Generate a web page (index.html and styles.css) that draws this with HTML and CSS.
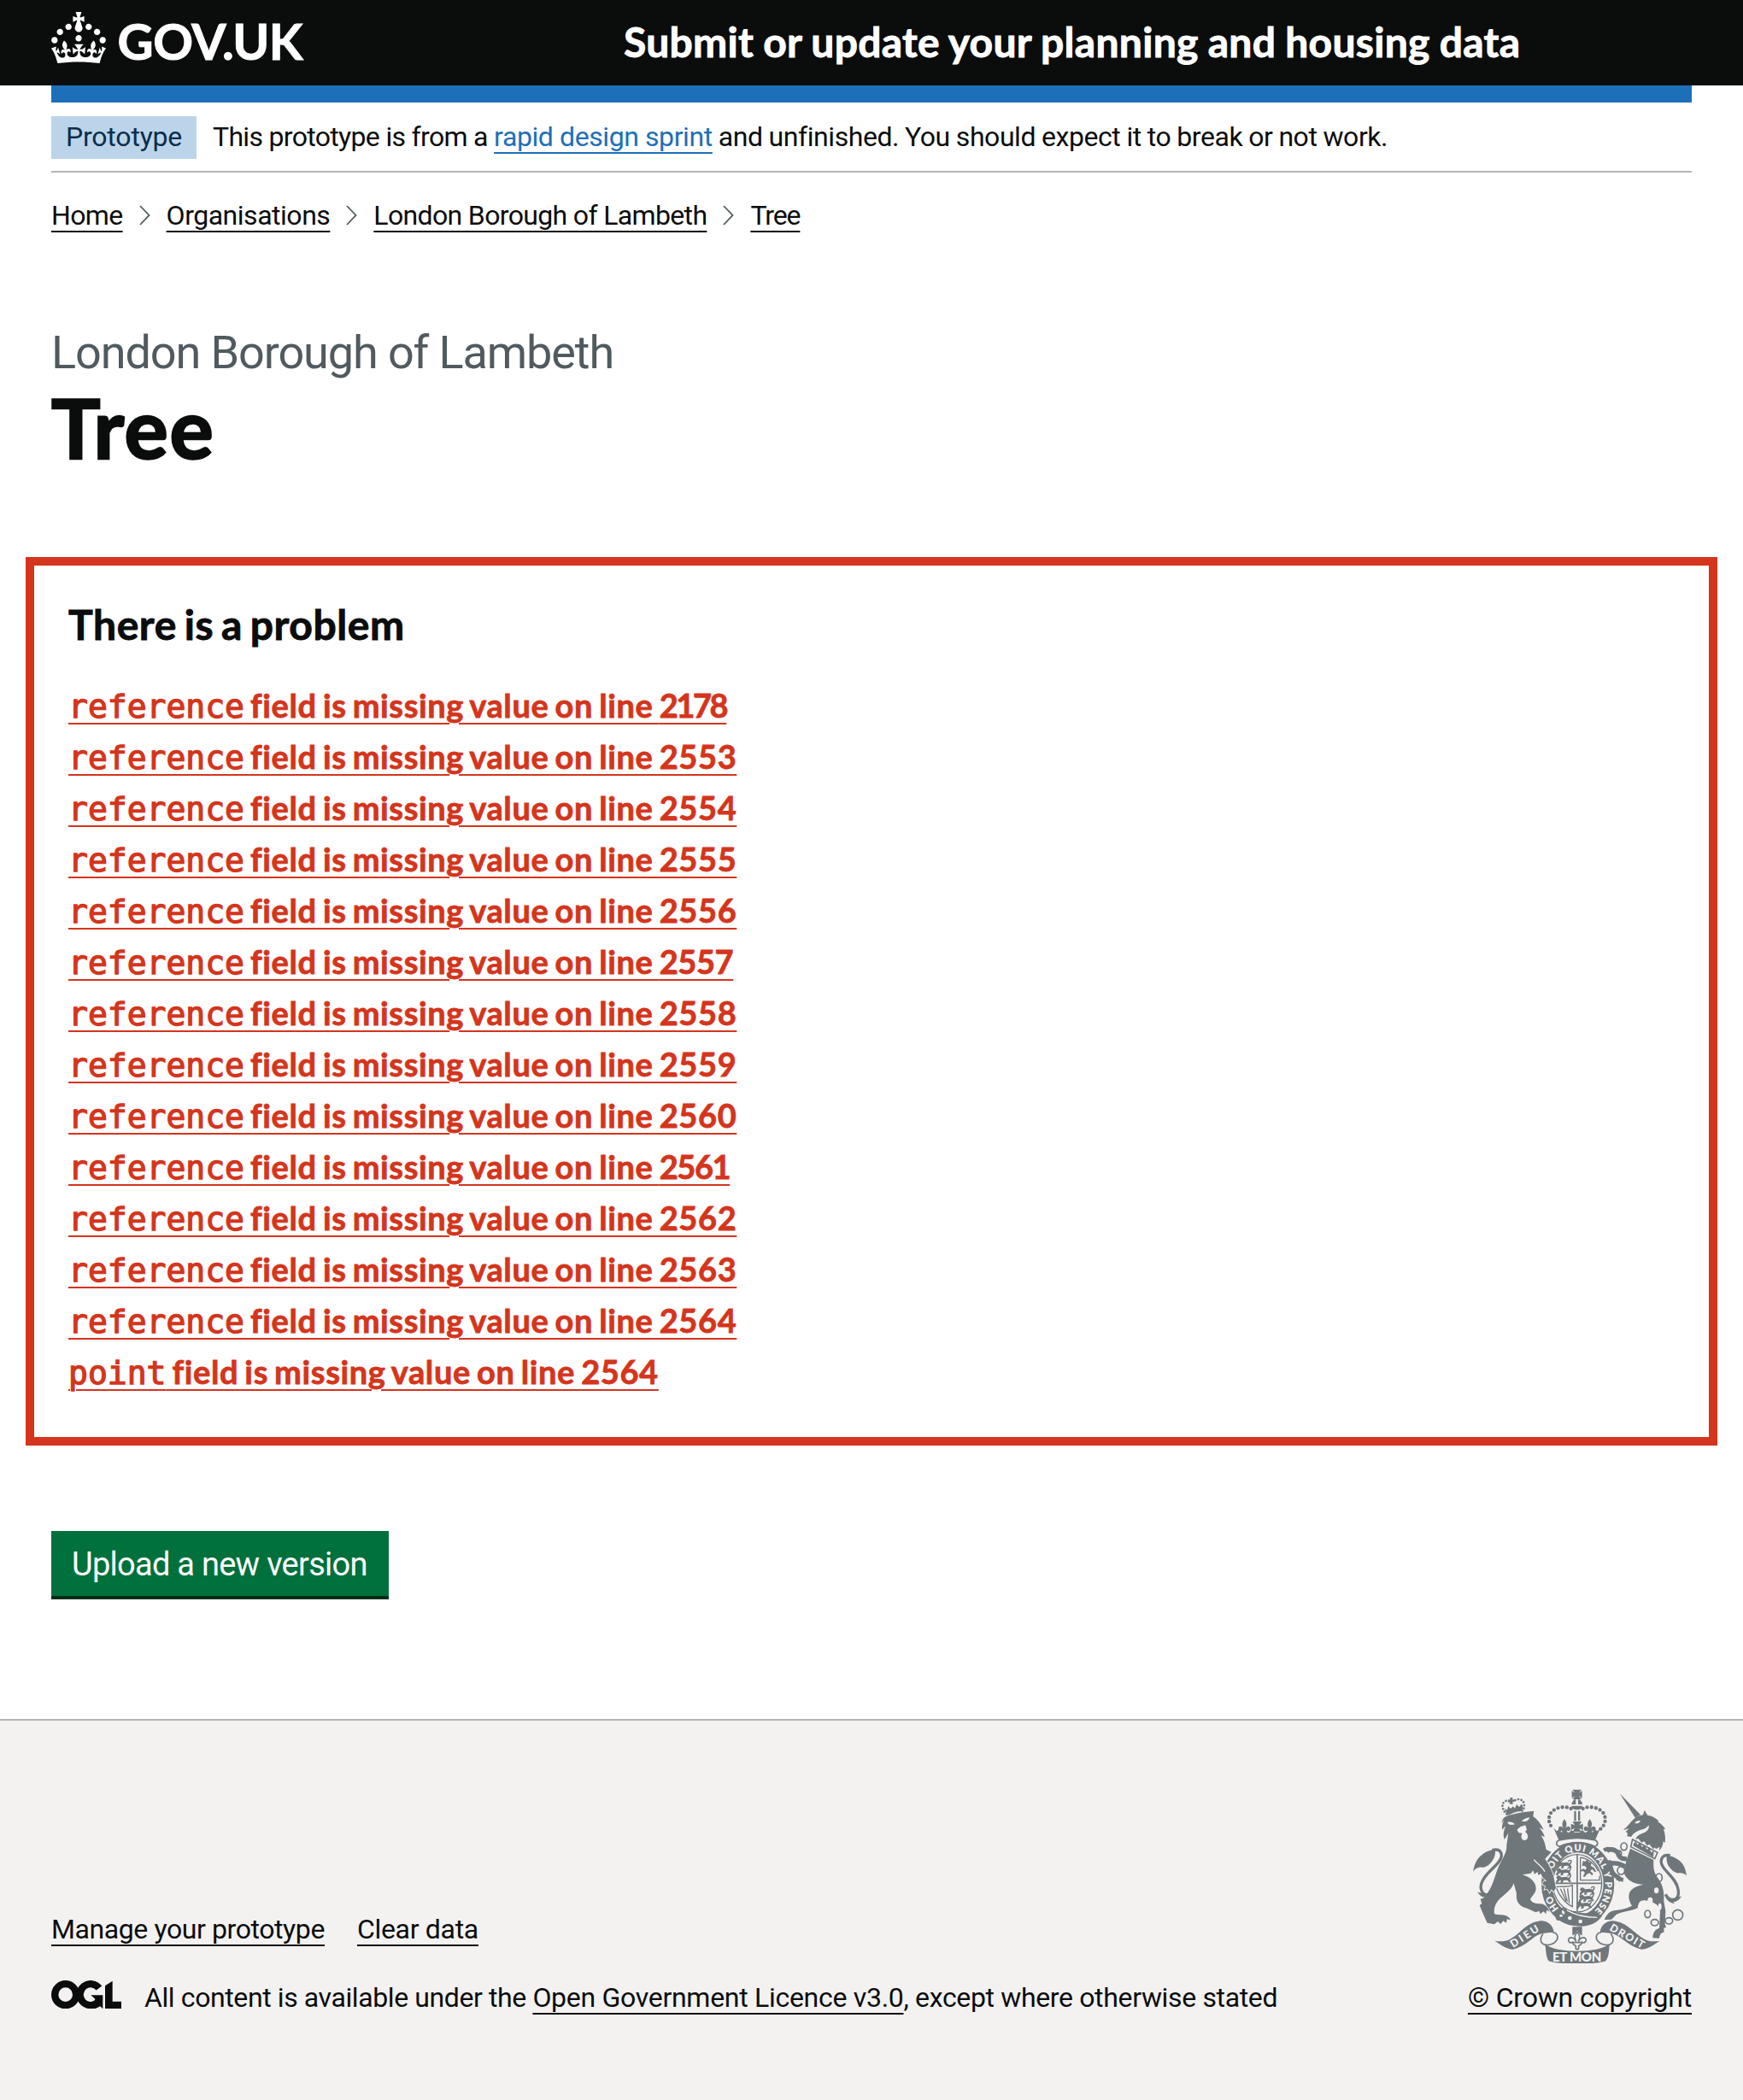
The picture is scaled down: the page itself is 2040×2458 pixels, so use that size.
FILE: index.html
```html
<!DOCTYPE html>
<html lang="en">
<head>
<meta charset="utf-8">
<title>Tree - Submit or update your planning and housing data</title>
<link rel="stylesheet" href="styles.css">
</head>
<body>
<header class="header">
  <div class="header-inner">
    <a class="logo" href="#" aria-label="GOV.UK">
      <svg class="logo-svg" viewBox="0 0 150 30" width="300" height="60">
        <path fill="#fff" d="M22.6 10.4c-1 .4-2-.1-2.4-1-.4-.9.1-2 1-2.4.9-.4 2 .1 2.4 1s-.1 2-1 2.4m-5.9 6.7c-.9.4-2-.1-2.4-1-.4-.9.1-2 1-2.4.9-.4 2 .1 2.4 1s-.1 2-1 2.4m10.8-3.7c-1 .4-2-.1-2.4-1-.4-.9.1-2 1-2.4.9-.4 2 .1 2.4 1s0 2-1 2.4m3.3 4.8c-1 .4-2-.1-2.4-1-.4-.9.1-2 1-2.4.9-.4 2 .1 2.4 1s-.1 2-1 2.4M17 4.7l2.3 1.2V2.5l-2.3.7-.2-.2.9-3h-3.4l.9 3-.2.2c-.1.1-2.3-.7-2.3-.7v3.4L15 4.7c.1.1.1.2.2.2l-1.3 4c-.1.2-.1.4-.1.6 0 1.1.8 2 1.9 2.2h.7c1-.2 1.9-1.1 1.9-2.1 0-.2 0-.4-.1-.6l-1.3-4c-.1-.2 0-.2.1-.3m-7.6 5.7c.9.4 2-.1 2.4-1 .4-.9-.1-2-1-2.4-.9-.4-2 .1-2.4 1s0 2 1 2.4m-5 3c.9.4 2-.1 2.4-1 .4-.9-.1-2-1-2.4-.9-.4-2 .1-2.4 1s.1 2 1 2.4m-3.2 4.8c.9.4 2-.1 2.4-1 .4-.9-.1-2-1-2.4-.9-.4-2 .1-2.4 1s0 2 1 2.4m14.8 11c4.4 0 8.6.3 12.3.8 1.1-4.5 2.4-7 3.7-8.8l-2.5-.9c.2 1.3.3 1.9 0 2.7-.4-.4-.8-1.1-1.1-2.3l-1.2 4c.7-.5 1.3-.8 2-.9-1.1 2.5-2.6 3.1-3.5 3-1.1-.2-1.7-1.2-1.5-2.1.3-1.2 1.5-1.5 2.1-.1 1.1-2.3-.8-3-2-2.3 1.9-1.9 2.1-3.5.6-5.6-2.1 1.6-2.1 3.2-1.2 5.5-1.2-1.4-3.2-.6-2.5 1.6.9-1.4 2.1-.5 1.9.8-.2 1.1-1.7 2.1-3.5 1.9-2.7-.2-2.9-2.1-2.9-3.6.7-.1 1.9.5 2.9 1.9l.4-4.3c-1.1 1.1-2.1 1.4-3.2 1.4.4-1.2 2.1-3 2.1-3h-5.4s1.7 1.9 2.1 3c-1.1 0-2.1-.2-3.2-1.4l.4 4.3c1-1.4 2.2-2 2.9-1.9-.1 1.5-.2 3.4-2.9 3.6-1.9.2-3.4-.8-3.5-1.9-.2-1.3 1-2.2 1.9-.8.7-2.3-1.2-3-2.5-1.6.9-2.2.9-3.9-1.2-5.5-1.5 2-1.3 3.7.6 5.6-1.2-.7-3.1 0-2 2.3.6-1.4 1.8-1.1 2.1.1.2.9-.3 1.9-1.5 2.1-.9.2-2.4-.5-3.5-3 .6 0 1.2.3 2 .9l-1.2-4c-.3 1.1-.7 1.9-1.1 2.3-.3-.8-.2-1.4 0-2.7l-2.9.9C1.3 23 2.6 25.5 3.7 30c3.7-.5 7.9-.8 12.3-.8"/>
        <text class="logo-text" x="38.8" y="28" textLength="108.500" lengthAdjust="spacing">GOV.UK</text>
      </svg>
    </a>
    <a class="service" href="#">Submit or update your planning and housing data</a>
  </div>
</header>

<div class="container">
  <div class="blue-bar"></div>
  <div class="phase">
    <strong class="tag">Prototype</strong>
    <p class="phase-text"><span class="phase-a">This prototype is from a </span><a class="link phase-link" href="#">rapid design sprint</a><span class="phase-b"> and unfinished. You should expect it to break or not work.</span></p>
  </div>

  <nav class="crumbs">
    <a class="crumb crumb-home" href="#">Home</a>
    <svg class="chev" viewBox="0 0 13 24"><path d="M1 1l10.500 11L1 23"/></svg>
    <a class="crumb crumb-orgs" href="#">Organisations</a>
    <svg class="chev" viewBox="0 0 13 24"><path d="M1 1l10.500 11L1 23"/></svg>
    <a class="crumb crumb-org" href="#">London Borough of Lambeth</a>
    <svg class="chev" viewBox="0 0 13 24"><path d="M1 1l10.500 11L1 23"/></svg>
    <a class="crumb crumb-tree" href="#">Tree</a>
  </nav>

  <main>
    <span class="caption">London Borough of Lambeth</span>
    <h1 class="title">Tree</h1>

    <section class="errors">
      <h2 class="errors-title">There is a problem</h2>
      <ul class="errors-list">
        <li><a href="#"><code>reference</code> field is missing value on line <span class="n3">2178</span></a></li>
        <li><a href="#"><code>reference</code> field is missing value on line 2553</a></li>
        <li><a href="#"><code>reference</code> field is missing value on line 2554</a></li>
        <li><a href="#"><code>reference</code> field is missing value on line 2555</a></li>
        <li><a href="#"><code>reference</code> field is missing value on line 2556</a></li>
        <li><a href="#"><code>reference</code> field is missing value on line <span class="n1">2557</span></a></li>
        <li><a href="#"><code>reference</code> field is missing value on line 2558</a></li>
        <li><a href="#"><code>reference</code> field is missing value on line 2559</a></li>
        <li><a href="#"><code>reference</code> field is missing value on line 2560</a></li>
        <li><a href="#"><code>reference</code> field is missing value on line <span class="n2">2561</span></a></li>
        <li><a href="#"><code>reference</code> field is missing value on line 2562</a></li>
        <li><a href="#"><code>reference</code> field is missing value on line 2563</a></li>
        <li><a href="#"><code>reference</code> field is missing value on line 2564</a></li>
        <li><a href="#"><code>point</code> field is missing value on line 2564</a></li>
      </ul>
    </section>

    <button class="button">Upload a new version</button>
  </main>
</div>

<footer class="footer">
  <div class="footer-inner">
    <div class="footer-main">
      <div class="footer-links">
        <a class="flink manage" href="#">Manage your prototype</a>
        <a class="flink clear" href="#">Clear data</a>
      </div>
      <div class="licence">
        <svg class="ogl" viewBox="30 55 246 100" role="img" aria-label="OGL">
          <circle class="ogl-ring" cx="80" cy="105" r="37.500"/>
          <path class="ogl-ring" d="M198 82A37.500 37.500 0 1 0 192 134"/>
          <path d="M169 107h42v48l-9-9c-8 5-18 9-30 9v-26c8 0 11-4 12-9z"/>
          <path d="M219 74l26-17v72h31v26h-57z"/>
        </svg>
        <p class="licence-text"><span class="lic-a">All content is available under the </span><a class="flink lic-link" href="#">Open Government Licence v3.0</a><span class="lic-b">, except where otherwise stated</span></p>
      </div>
    </div>
    <div class="copyright">
      <svg class="crest" viewBox="72 70 750 612" aria-hidden="true">
        <defs>
          <path id="motto-a" d="M373 490A97 117 0 0 1 344 423"/>
          <path id="motto-b" d="M346 373A97 117 0 1 1 488 506"/>
          <g id="fleur"><path d="M0-20c10 12 9 22 3 32 8-10 18-8 18 2 0 7-8 10-12 5 0 5-3 7-6 9h-6c-3-2-6-4-6-9-4 5-12 2-12-5 0-10 10-12 18-2-6-10-7-20 3-32z"/></g>
          <g id="passant"><path d="M-30-2l5-7 9 1 4 5 18-2 8 4 6-8 3 2-5 11 5 10h-8l-5-7-14 1-3 8h-8l2-9-8 3-3 6h-7l2-8 4-4z"/><path class="thin" d="M10-6c2-8 12-7 11-1"/></g>
        </defs>

        <!-- crown -->
        <path d="M421 72h32l-10 12 12-8v26l-12-9 10 13h-32l10-13-12 9V76l12 8z"/>
        <path d="M418 124c2-12 9-18 15-19v19zM441 105c8 2 14 8 15 19h-15zM418 129h38c0 9-8 14-19 14s-19-5-19-14z"/>
        <path d="M427 147h7v35h-7zM441 147h7v35h-7z"/>
        <path class="pearls" d="M416 139C395 127 355 135 343 158C335 175 338 195 355 210"/>
        <path class="pearls" d="M458 139C480 127 519 135 532 158C540 175 537 195 520 210"/>
        <use href="#fleur" x="393" y="196"/><use href="#fleur" x="482" y="196"/>
        <path d="M422 184h32l-9 13 13-5v22l-13-6 7 12h-30l7-12-13 6v-22l13 5z"/>
        <path d="M355 207l11 11 10-8 6 12 14-6 12 8 10-10 10 8h18l10-8 10 10 12-8 14 6 6-12 10 8 11-11-18 42c-42-10-86-10-128 0z"/>
        <path class="line" d="M374 250c40-10 88-10 128 0 10 5 10 18-2 22-36-18-88-18-124 0-14-4-14-17-2-22z"/>

        <!-- garter and shield -->
        <ellipse class="garter" cx="440" cy="403" rx="109" ry="129"/>
        <ellipse class="thin" cx="438" cy="401" rx="86" ry="101"/>
        <path class="quarter" d="M438 299v200M352 401h172"/>
        <use href="#passant" x="396" y="332"/><use href="#passant" x="394" y="357"/><use href="#passant" x="394" y="383"/>
        <use href="#passant" x="477" y="425"/><use href="#passant" x="474" y="450"/><use href="#passant" x="466" y="474"/>
        <path d="M458 322l8 3 5-7 10 10 8 0-4 11 12 8 8 14-6 0-9-10-6 8 10 8-4 7-9-9-9 4-8 10-6-2 7-12-7-8-6 4-2-6 10-5 7 4 4-8-8-7-8 2z"/>
        <path class="thin" d="M449 310v80h67v-15M449 310c28 4 52 24 62 48"/>
        <path class="harp" d="M363 414c18-5 37 4 58-6v75c-24-10-46-38-58-69zM379 420l20 43M391 419l12 46M404 419l6 52"/>
        <text class="motto"><textPath href="#motto-a">HO</textPath></text>
        <text class="motto"><textPath href="#motto-b" textLength="408">SOIT QUI MAL Y PENSE</textPath></text>
        <path d="M392 486c35 20 80 23 104 16l30 13c-28 44-97 50-142 12z"/>
        <path class="cut" d="M400 495c34 20 72 26 108 26"/>
        <g class="light"><circle cx="412" cy="523" r="7"/><circle cx="449" cy="535" r="7"/><path d="M384 497c8 0 12 6 9 12l-6 8c-6 4-10 3-12-2 2-3 8-5 9-9z"/></g>
        <path class="ring" d="M377 492c14-8 25 1 22 12M374 505c-16 12-10 27 3 24 16-3 16-18 5-22z"/>

        <!-- lion -->
        <path class="dots" d="M190 158C174 144 170 122 184 114C192 108 198 112 202 118M246 148C256 132 254 112 238 107C228 104 220 108 216 114"/>
        <path d="M202 100h10l-2 8 8-2v9l-7-1 1 9h-12l2-9-7 1v-9l7 2zM182 138l10 6 4-14 8 9 9-8 6 7 6-14 9 9 8-10 5 5-1 20c-18 0-38 6-52 17z"/>
        <path class="edge" d="M172 190c2-12 7-20 16-24 30-10 60-16 98-19l-3 19c14 10 28 26 37 47l-16-8c9 10 16 20 20 34l-13-6c11 18 15 32 18 50l18 8-22 24c14 22 27 45 31 68l7 34-8 14-8-9-6 12-8-14-10 3 4-12-12-7 6-10 10-1-14-12-7-14-8 6-4-12-10 8-5-13-8 10-30 5c24 6 48 24 48 48 0 18-16 28-20 38 6 14 20 15 34 16 20 1 29 15 34 28l-10-6-3 14-8-9-12 9-4-11-12 5-30-14c-30-8-40-24-37-52l-10-36c-8 28-46 46-60 68-8 12-10 28-8 39 14 8 46-4 57 22l-13-3-2 13-11-7-9 11-10-9-12 10-25-5-15-33-12-29 8-5-5-17 10-3c28-28 35-58 48-96 14-38 36-60 34-90l6-42-13 22c-8-14-2-34 4-48l-13 14c-1-14 3-27 8-37z"/>
        <g class="light"><path d="M193 186c12-2 22 1 26 8-14 4-24 2-26-8zM243 183c8-10 17-11 27-14-1 12-12 18-27 14zM226 213l12-10 18-6 5 16-6 7c14 11 12 28-1 30-12 0-16-14-9-25l-12-1z"/></g>
        <path class="cut" d="M286 318c10 14 28 22 38 42"/>
        <path d="M72 360c6-28 12-46 36-63 14-10 30-15 42-13 2 21-7 36-18 48-10 10-21 15-30 13-13-2-22 5-30 15z"/>
        <path class="tail" d="M139 285c32-9 42 16 24 40-18 25-52 44-62 78-4 14 0 30 12 37 18 6 32-8 40-22"/>
        <path d="M87 431c12 6 17 4 27 7 13 2 23-3 31-10-3 16-13 25-32 27l7-6c-13 3-24-2-33-18z"/>

        <!-- unicorn -->
        <path d="M587 86l73 74-18 12z"/>
        <path d="M600 213c14-9 22-24 37-38 11-9 22-13 32-14l5-17 11 18c18 3 32 12 40 21l-5 1c12 8 21 16 28 28l-7-2c5 16 8 31 5 49l-6-5c-1 13-5 24-14 33l1-14c-9 6-13 10-17 2l-5 6-14-17-8 5-10-15-9 4-12-14-9 2c5-15 20-18 31-23 14-6 17-18 15-26-9 12-21 15-32 18-12 4-23 12-30 23l-14-2 2-11-7-5 12-11-17 4z"/>
        <path class="light" d="M640 190c4-8 13-10 20-8-4 8-10 10-20 8z"/>
        <path class="line" d="M632 247l88 46-10 22-84-42z"/>
        <path d="M633 268l9-14 8 12 7-8 9 16 8-8 9 17 9-8 5 18 10-7-2 24z"/>
        <path class="edge" d="M624 279l82 40c-1 27 0 42 14 62 20 26 24 54 22 82l6 35-2 46 4 12-8 2 1 14-12 6-6 16-22-1c0-18 8-30 23-34l3-58c-3-28-28-36-55-40-16-2-22 10-24 27-22 11-52 12-74 22l-18 18-25 1c9-20 21-32 40-33 21-3 41-7 57-16-11-16-15-38-5-52 12-15 29-18 45-23-27 0-50-10-62-28-10-14-5-32 0-45 4-22 12-36 16-53z"/>
        <path class="limb" d="M612 315c-20 2-29-8-32-22-10-10-24-14-38-6M606 343c-20-14-38-15-54-9 6 18 6 36 28 45l12 11"/>
        <path d="M534 290l-6-11 14-6 18 2-10 14zM543 337l-8-10 16-8 18 6-14 14zM577 375l24 8-3 14-14-7-9 1z"/>
        <g class="ring"><ellipse cx="602" cy="272" rx="11" ry="13"/><ellipse cx="585" cy="296" rx="8" ry="10"/><ellipse cx="592" cy="356" rx="13" ry="14"/><ellipse cx="725" cy="381" rx="11" ry="14"/><ellipse cx="685" cy="509" rx="10" ry="13"/><ellipse cx="710" cy="539" rx="13" ry="11"/><ellipse cx="760" cy="533" rx="13" ry="11"/><circle cx="791" cy="512" r="18"/></g>
        <g class="light"><ellipse cx="716" cy="426" rx="8" ry="10"/><ellipse cx="694" cy="461" rx="9" ry="11"/><ellipse cx="728" cy="483" rx="6" ry="12"/></g>
        <path d="M822 374c-5-28-10-42-32-57-14-10-27-14-38-12-2 20 4 34 14 45 9 11 20 16 30 15 11-1 19 2 26 9z"/>
        <path class="tail" d="M764 303c-28-6-40 18-24 42 16 23 46 42 52 76 4 18-2 32-10 39-14 4-27-6-34-20"/>
        <path d="M804 446c-12 6-18 4-27 7-14 1-23-3-31-9 5 16 17 26 34 28l-5-6c12 0 22-6 29-20z"/>

        <!-- scroll -->
        <path d="M148 603c20 3 38 3 54-6 40-22 56-58 108-64 24-1 44 16 46 40l-42 4c-32 8-54 46-102 56-22 0-42-16-64-30zM728 603c-20 3-38 3-54-6-40-22-58-58-110-64-24-1-44 16-46 40l42 4c32 8 56 46 104 56 22 0 42-16 64-30z"/>
        <path class="line" d="M318 578c-14 20-10 38 14 40 26-2 38-16 37-30-2-10-8-14-17-14M556 578c14 20 10 38-14 40-26-2-38-16-37-30 2-10 8-14 17-14"/>
        <path d="M324 614c40 34 186 34 228 0-4 24-1 42-14 60-28 13-170 13-200 0-12-16-8-38-14-60z"/>
        <path d="M421 554h34v30c-8-2-10-9-17-17-7 8-9 15-17 17z"/>
        <path class="line" d="M438 572c12 12 10 22 4 33 9-18 27-16 27-5 0 9-9 12-14 8-1 9-8 10-12 13v7c0 7-10 7-10 0v-7c-4-3-11-4-12-13-5 4-14 1-14-8 0-11 18-13 27 5-6-11-8-21 4-33zM421 609h34"/>
        <text class="scroll-text" transform="translate(213 628) rotate(-33)" textLength="112">DIEU</text>
        <text class="scroll-text" transform="translate(549 564) rotate(30)" textLength="134">DROIT</text>
        <text class="scroll-text scroll-mid" x="351" y="675" textLength="172">ET MON</text>
      </svg>
      <a class="flink crown" href="#">© Crown copyright</a>
    </div>
  </div>
</footer>
</body>
</html>
```
FILE: styles.css
```css
* { box-sizing: border-box; }

body {
  margin: 0;
  background: #fff;
  color: #0b0c0c;
  font: 400 32px/40px Roboto, "Liberation Sans", sans-serif;
}

p, h1, h2, ul { margin: 0; padding: 0; }
a { color: inherit; }

.container, .header-inner, .footer-inner { margin: 0 60px; }

/* header */
.header { height: 100px; background: #0b0c0c; color: #fff; }
.header-inner { display: flex; align-items: flex-start; }
.logo { width: 670px; padding-top: 14px; text-decoration: none; }
.logo-svg { display: block; overflow: visible; }
.logo-text { font: 700 29px Lato, sans-serif; fill: #fff; stroke: #fff; stroke-width: 0.5; }
.service {
  padding-top: 19px;
  font: 700 48px/60px Lato, sans-serif;
  letter-spacing: 0.3px;
  word-spacing: -1px;
  -webkit-text-stroke: 0.9px currentColor;
  color: #fff;
  text-decoration: none;
  white-space: nowrap;
}
.blue-bar { height: 20px; background: #1d70b8; }

/* phase banner */
.phase {
  display: flex;
  align-items: flex-start;
  height: 82px;
  padding-top: 16px;
  border-bottom: 2px solid #b1b4b6;
}
.tag {
  width: 170px;
  height: 50px;
  padding: 4px 0 0 17px;
  margin-right: 19px;
  background: #bbd4ea;
  color: #0c2d4a;
  font-weight: 400;
  letter-spacing: -0.2px;
}
.phase-text { padding-top: 4px; white-space: pre; }
.phase-a { letter-spacing: -0.68px; }
.phase-b { letter-spacing: -0.44px; word-spacing: -0.5px; }
.link, .crumb, .flink {
  text-decoration: underline;
  text-decoration-thickness: 2px;
  text-underline-offset: 7px;
}
.link { color: #1d70b8; }
.phase-link { letter-spacing: -0.41px; }

/* breadcrumbs */
.crumbs { display: flex; align-items: center; gap: 19px; height: 40px; margin-top: 30px; }
.crumb { white-space: nowrap; }
.chev { width: 13px; height: 24px; fill: none; stroke: #505a5f; stroke-width: 1.8; }
.crumb-home { letter-spacing: -0.63px; }
.crumb-orgs { letter-spacing: -0.48px; }
.crumb-org { letter-spacing: -0.65px; }
.crumb-tree { letter-spacing: -1.1px; }

/* page title */
.caption {
  display: block;
  margin: 111px 0 10px;
  font-size: 54px;
  line-height: 60px;
  letter-spacing: -1.1px;
  color: #505a5f;
}
.title {
  padding-top: 1px;
  margin-bottom: 106px;
  font: 700 96px/92px Lato, sans-serif;
  letter-spacing: 1.6px;
  -webkit-text-stroke: 2.4px currentColor;
}

/* error summary */
.errors { margin: 0 -30px 100px; padding: 40px; border: 10px solid #d4351c; }
.errors-title {
  padding-top: 1px;
  margin-bottom: 43px;
  font: 700 48px/56px Lato, sans-serif;
  letter-spacing: 0.6px;
  word-spacing: -3.5px;
  -webkit-text-stroke: 0.9px currentColor;
}
.errors-list {
  list-style: none;
  font: 700 38px/46px Lato, sans-serif;
  letter-spacing: 0.62px;
  word-spacing: -2.7px;
}
.errors-list li { margin-bottom: 14px; }
.errors-list a {
  color: #d4351c;
  text-decoration: underline;
  text-decoration-thickness: 2px;
  text-underline-offset: 6px;
  -webkit-text-stroke: 0.8px #d4351c;
}
.errors-list code {
  font: 400 38px/1 "DejaVu Sans Mono", monospace;
  letter-spacing: 0;
  -webkit-text-stroke: 1.3px #d4351c;
}
.n3 { letter-spacing: -2.4px; }
.n2 { letter-spacing: -1.4px; }
.n1 { letter-spacing: -0.4px; }

.button {
  display: block;
  width: 395px;
  height: 76px;
  margin: 0 0 144px;
  padding: 20px 0 18px 24px;
  border: 0;
  background: #00703c;
  box-shadow: 0 4px 0 #002d18;
  color: #fff;
  font: 400 38px/38px Roboto, sans-serif;
  letter-spacing: -0.73px;
  text-align: left;
}

/* footer */
.footer { padding: 80px 0 100px; border-top: 2px solid #b1b4b6; background: #f3f2f1; }
.footer-inner { display: flex; justify-content: space-between; align-items: flex-end; }
.footer-links { display: flex; gap: 38px; margin-bottom: 40px; }
.flink { text-underline-offset: 7px; white-space: nowrap; }
.manage { letter-spacing: -0.41px; }
.clear { letter-spacing: -0.31px; }
.licence { display: flex; gap: 27px; height: 40px; }
.ogl { width: 82px; height: 33.4px; fill: #0b0c0c; }
.ogl-ring { fill: none; stroke: #0b0c0c; stroke-width: 25; }
.licence-text { white-space: pre; }
.lic-a { letter-spacing: -0.4px; }
.lic-link { letter-spacing: -0.29px; }
.lic-b { letter-spacing: -0.35px; }
.copyright { display: flex; flex-direction: column; align-items: center; gap: 20px; }
.crown { letter-spacing: -0.17px; }

/* royal arms */
.crest { width: 250px; height: 204px; fill: #6f777b; stroke: none; }
.crest .line, .crest .ring, .crest .thin, .crest .tail, .crest .limb, .crest .harp,
.crest .quarter, .crest .garter, .crest .pearls, .crest .dots { fill: none; stroke: #6f777b; stroke-width: 5; }
.crest .line { fill: #f3f2f1; }
.crest .thin, .crest .harp { stroke-width: 4; }
.crest .tail { stroke-width: 10; }
.crest .limb { stroke-width: 16; }
.crest .garter { stroke-width: 38; }
.crest .pearls { stroke-width: 13; stroke-linecap: round; stroke-dasharray: 0 15.5; }
.crest .dots { stroke-width: 8; stroke-linecap: round; stroke-dasharray: 0 11; }
.crest .edge { stroke: #f3f2f1; stroke-width: 5; paint-order: stroke; }
.crest .light { fill: #f3f2f1; }
.crest .cut { fill: none; stroke: #f3f2f1; stroke-width: 4; }
.motto { font: 800 33px Lato, sans-serif; fill: #f3f2f1; }
.scroll-text { font: 900 37px Lato, sans-serif; fill: #f3f2f1; }
.scroll-mid { font-size: 45px; }
```
